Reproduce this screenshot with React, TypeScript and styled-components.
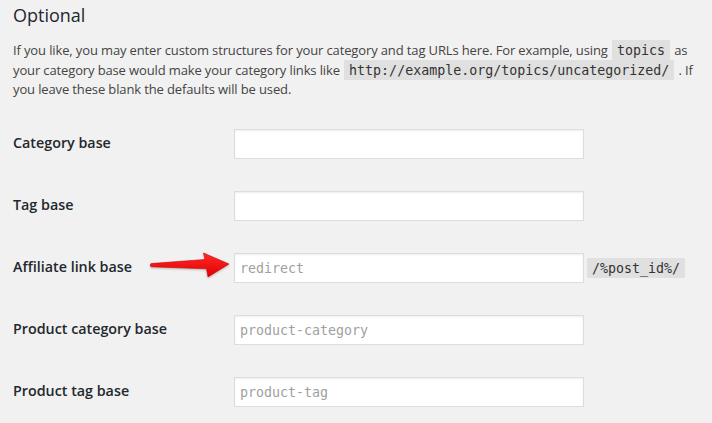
import React from "react";
import styled, { createGlobalStyle } from "styled-components";

const GlobalStyle = createGlobalStyle`
  html, body { margin: 0; padding: 0; background: #f1f1f1; }
  body { font-family: "Open Sans", "Liberation Sans", sans-serif; color: #444; }
`;

const Wrap = styled.div`
  padding: 0 13px;
  width: 712px;
  box-sizing: border-box;
`;

const Heading = styled.h2`
  margin: 4px 0 0;
  font-size: 18px;
  line-height: 1.3;
  font-weight: 400;
  color: #23282d;
`;

const Intro = styled.p`
  margin: 14px 0 0;
  font-size: 13px;
  letter-spacing: -0.13px;
  line-height: 19.5px;
  color: #444;
`;

const Code = styled.code`
  font-family: "DejaVu Sans Mono", "Liberation Mono", monospace;
  font-size: 13.3px;
  letter-spacing: 0;
  padding: 3px 5px 2px;
  margin: 0 1px;
  background: rgba(0, 0, 0, 0.07);
  color: #333;
`;

const Table = styled.div`
  margin-top: 13.5px;
  display: grid;
  grid-template-columns: 221px 1fr;
  grid-auto-rows: 62px;
`;

const Row = styled.div`
  display: contents;
`;

const Label = styled.label`
  display: flex;
  align-items: center;
  padding-bottom: 4px;
  font-size: 14.3px;
  font-weight: 600;
  color: #23282d;
`;

const Field = styled.div`
  position: relative;
  display: flex;
  align-items: center;
  gap: 2px;
`;

const Input = styled.input`
  box-sizing: border-box;
  width: 350px;
  height: 30px;
  margin: 0;
  padding: 2px 5px;
  border: 1px solid #ddd;
  box-shadow: inset 0 1px 2px rgba(0, 0, 0, 0.07);
  background: #fff;
  outline: none;
  font-family: "DejaVu Sans Mono", "Liberation Mono", monospace;
  font-size: 13.3px;
  color: #32373c;
  &::placeholder { color: #a0a0a0; opacity: 1; }
`;

const Arrow = styled.svg`
  position: absolute;
  left: -86px;
  top: 13px;
  overflow: visible;
`;

const RedArrow = () => (
  <Arrow width="84" height="30" viewBox="0 0 84 30">
    <defs>
      <linearGradient id="ag" x1="0" y1="0" x2="0" y2="1">
        <stop offset="0" stopColor="#ff2a2a" />
        <stop offset="1" stopColor="#e00000" />
      </linearGradient>
    </defs>
    <path
      d="M3 13.6 L57 9.5 L55.5 3 L81 14 L60 27 L58.5 18.8 L3 16.8 Q1.4 15.2 3 13.6 Z"
      fill="url(#ag)"
      stroke="#d40000"
      strokeWidth="0.6"
      strokeLinejoin="round"
      style={{ filter: "drop-shadow(0 1px 1px rgba(0,0,0,0.25))" }}
    />
  </Arrow>
);

const rows: { label: string; placeholder?: string; suffix?: string; arrow?: boolean }[] = [
  { label: "Category base" },
  { label: "Tag base" },
  { label: "Affiliate link base", placeholder: "redirect", suffix: "/%post_id%/", arrow: true },
  { label: "Product category base", placeholder: "product-category" },
  { label: "Product tag base", placeholder: "product-tag" },
];

export default function App() {
  return (
    <Wrap>
      <GlobalStyle />
      <Heading>Optional</Heading>
      <Intro>
        If you like, you may enter custom structures for your category and tag URLs here. For example, using{" "}
        <Code>topics</Code> as your category base would make your category links like{" "}
        <Code>http://example.org/topics/uncategorized/</Code> . If you leave these blank the defaults will be used.
      </Intro>
      <Table>
        {rows.map((r) => (
          <Row key={r.label}>
            <Label>{r.label}</Label>
            <Field>
              {r.arrow && <RedArrow />}
              <Input type="text" placeholder={r.placeholder} />
              {r.suffix && <Code>{r.suffix}</Code>}
            </Field>
          </Row>
        ))}
      </Table>
    </Wrap>
  );
}
